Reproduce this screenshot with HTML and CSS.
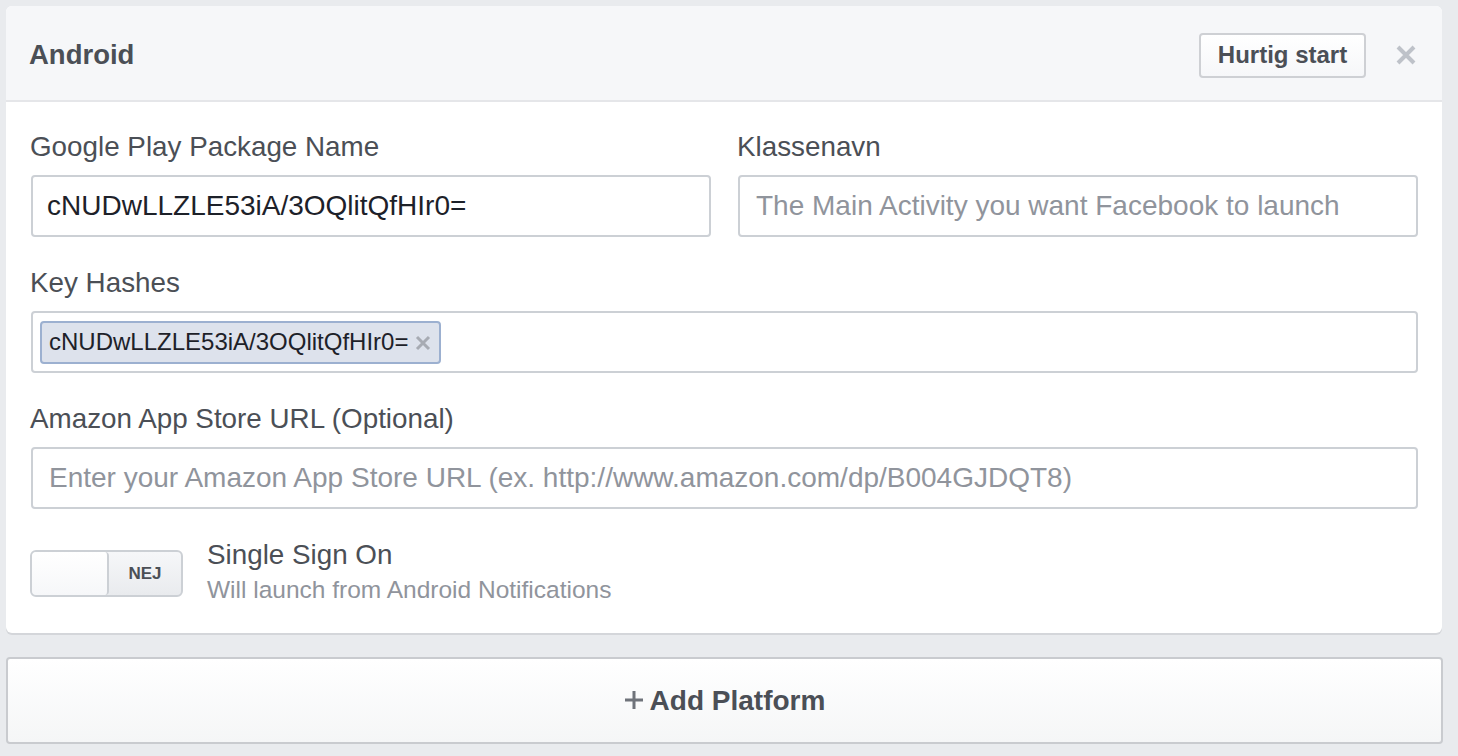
FILE: index.html
```
<!DOCTYPE html>
<html>
<head>
<meta charset="utf-8">
<link rel="stylesheet" href="styles.css">
</head>
<body>
<div class="page">
  <div class="card">
    <div class="card-head">
      <div class="title">Android</div>
      <div class="head-actions">
        <button class="btn">Hurtig start</button>
        <span class="close">
          <svg width="20" height="20" viewBox="0 0 20 20"><path d="M2 2 L18 18 M18 2 L2 18" stroke="#bec2c9" stroke-width="4" stroke-linecap="butt"/></svg>
        </span>
      </div>
    </div>
    <div class="card-body">
      <div class="row two">
        <div class="field">
          <div class="label">Google Play Package Name</div>
          <div class="input"><span class="value">cNUDwLLZLE53iA/3OQlitQfHIr0=</span></div>
        </div>
        <div class="field">
          <div class="label">Klassenavn</div>
          <div class="input"><span class="ph">The Main Activity you want Facebook to launch</span></div>
        </div>
      </div>
      <div class="field">
        <div class="label">Key Hashes</div>
        <div class="input tokens">
          <span class="token">cNUDwLLZLE53iA/3OQlitQfHIr0=<svg class="tok-x" width="16" height="16" viewBox="0 0 16 16"><path d="M2 2 L14 14 M14 2 L2 14" stroke="#a7abb3" stroke-width="3"/></svg></span>
        </div>
      </div>
      <div class="field">
        <div class="label">Amazon App Store URL (Optional)</div>
        <div class="input"><span class="ph">Enter your Amazon App Store URL (ex. http://www.amazon.com/dp/B004GJDQT8)</span></div>
      </div>
      <div class="sso">
        <div class="toggle">
          <div class="knob"></div>
          <div class="toggle-label">NEJ</div>
        </div>
        <div class="sso-text">
          <div class="sso-title">Single Sign On</div>
          <div class="sso-sub">Will launch from Android Notifications</div>
        </div>
      </div>
    </div>
  </div>
  <div class="add-card">
    <span class="plus">
      <svg width="20" height="20" viewBox="0 0 20 20"><path d="M10 1 V19 M1 10 H19" stroke="#6f737a" stroke-width="3"/></svg>
    </span>
    <span class="add-text">Add Platform</span>
  </div>
</div>
</body>
</html>
```
FILE: styles.css
```
* { box-sizing: border-box; }
html, body {
  margin: 0;
  padding: 0;
  background: #e9ebee;
  font-family: "Liberation Sans", Arial, Helvetica, sans-serif;
  color: #4b4f56;
}
.page {
  padding: 6px 15px 0 6px;
  width: 1458px;
  height: 756px;
  overflow: hidden;
}
.card {
  width: 1436px;
  background: #fff;
  border-radius: 6px;
  box-shadow: 0 2px 0 #d4d6da;
  overflow: hidden;
}
.card-head {
  height: 96px;
  background: #f6f7f9;
  border-bottom: 2px solid #e5e6e9;
  display: flex;
  align-items: center;
  justify-content: space-between;
  padding: 0 26px 0 23px;
}
.title {
  font-size: 27.5px;
  font-weight: bold;
  color: #4b4f56;
  margin-top: 4px;
}
.head-actions {
  display: flex;
  align-items: center;
  gap: 30px;
}
.btn {
  height: 45px;
  width: 167px;
  border: 2px solid #ced0d4;
  border-radius: 4px;
  background: linear-gradient(#ffffff, #f6f7f9);
  font-family: "Liberation Sans", Arial, sans-serif;
  font-weight: bold;
  font-size: 24px;
  color: #4b4f56;
  padding: 0;
  margin-top: 4px;
}
.close { display: flex; width: 20px; height: 20px; margin-top: 4px; }
.card-body {
  padding: 30px 24px 29px 24px;
  display: flex;
  flex-direction: column;
  gap: 31px;
}
.row.two {
  display: grid;
  grid-template-columns: 1fr 1fr;
  gap: 26px;
}
.field {
  display: flex;
  flex-direction: column;
  gap: 13px;
}
.label {
  font-size: 27.8px;
  line-height: 30px;
  color: #4b4f56;
}
.input {
  height: 62px;
  border: 2px solid #ccd0d5;
  border-radius: 4px;
  margin-left: 1px;
  display: flex;
  align-items: center;
  padding: 0 16px;
  font-size: 28px;
}
.value { color: #1d2129; font-size: 28px; margin-left: -2px; }
.ph { color: #90949c; }
.tokens { padding: 0 7px; }
.token {
  display: inline-flex;
  align-items: center;
  height: 43px;
  padding: 0 8px 0 7px;
  background: #dde2ec;
  border: 2px solid #9cb0d0;
  border-radius: 4px;
  font-size: 24px;
  color: #1d2129;
  gap: 7px;
}
.tok-x { margin-top: 1px; }
.sso {
  display: flex;
  align-items: flex-start;
  gap: 24px;
  margin-top: 10px;
}
.toggle {
  width: 153px;
  height: 47px;
  border: 2px solid #ccd0d5;
  border-radius: 6px;
  background: linear-gradient(#f6f7f9, #e9ebee);
  display: flex;
  overflow: hidden;
}
.knob {
  width: 77px;
  height: 100%;
  background: linear-gradient(#ffffff, #f6f7f9);
  border-right: 2px solid #ccd0d5;
  border-radius: 4px;
}
.toggle-label {
  flex: 1;
  display: flex;
  align-items: center;
  justify-content: center;
  font-weight: bold;
  font-size: 17px;
  color: #4b4f56;
}
.sso-text { margin-top: -10px; }
.sso-title {
  font-size: 27.8px;
  line-height: 30px;
  color: #4b4f56;
}
.sso-sub {
  font-size: 24.5px;
  line-height: 28px;
  margin-top: 6px;
  color: #90949c;
}
.add-card {
  margin-top: 24px;
  width: 1437px;
  height: 87px;
  border: 2px solid #c9cbcf;
  border-radius: 4px;
  background: linear-gradient(#ffffff, #f5f6f7);
  display: flex;
  align-items: center;
  justify-content: center;
  gap: 6px;
}
.plus { display: flex; margin-top: -2px; }
.add-text {
  font-size: 28px;
  font-weight: bold;
  color: #4b4f56;
}
```
